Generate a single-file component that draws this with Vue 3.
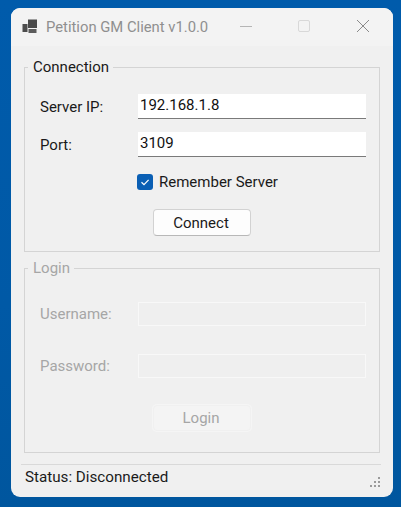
<script setup>
const connectionFields = [
  { label: 'Server IP:', value: '192.168.1.8' },
  { label: 'Port:', value: '3109' },
]
const loginFields = [{ label: 'Username:' }, { label: 'Password:' }]
</script>

<template>
  <div class="desktop">
    <div class="window">
      <header class="titlebar">
        <svg class="app-icon" width="16" height="16" viewBox="0 0 16 16">
          <rect x="0.5" y="6" width="5" height="8" fill="#4d4d4d" />
          <rect x="6" y="1.5" width="9" height="8.5" fill="#4a4a4a" />
          <rect x="6.5" y="11" width="8" height="4" fill="#5c5c5c" />
        </svg>
        <span class="title">Petition GM Client v1.0.0</span>
        <div class="controls">
          <svg width="14" height="14" viewBox="0 0 14 14" class="ctl-min"><path d="M1 7.5H13" stroke="#b5b5b5" stroke-width="1" /></svg>
          <svg width="14" height="14" viewBox="0 0 14 14" class="ctl-max"><rect x="1.5" y="1.5" width="11" height="11" rx="1.5" fill="none" stroke="#d8d8d8" /></svg>
          <svg width="14" height="14" viewBox="0 0 14 14" class="ctl-close"><path d="M1 1L13 13M13 1L1 13" stroke="#8a8a8a" stroke-width="1" /></svg>
        </div>
      </header>

      <main class="content">
        <fieldset class="group connection">
          <legend>Connection</legend>
          <div v-for="f in connectionFields" :key="f.label" class="row">
            <label>{{ f.label }}</label>
            <div class="input">{{ f.value }}</div>
          </div>
          <div class="check-row">
            <span class="checkbox">
              <svg width="16" height="16" viewBox="0 0 16 16"><path d="M4.5 8.2L7 10.6L11.6 5.8" fill="none" stroke="#fff" stroke-width="1.2" /></svg>
            </span>
            <span>Remember Server</span>
          </div>
          <div class="btn-row"><button class="btn">Connect</button></div>
        </fieldset>

        <fieldset class="group login">
          <legend>Login</legend>
          <div v-for="f in loginFields" :key="f.label" class="row">
            <label>{{ f.label }}</label>
            <div class="input off"></div>
          </div>
          <div class="btn-row"><button class="btn off">Login</button></div>
        </fieldset>
      </main>

      <footer class="statusbar">
        <span class="status-text">Status: Disconnected</span>
        <svg class="grip" width="12" height="12" viewBox="0 0 12 12" fill="#9a9a9a">
          <rect x="9" y="1" width="2" height="2" />
          <rect x="5" y="5" width="2" height="2" />
          <rect x="9" y="5" width="2" height="2" />
          <rect x="1" y="9" width="2" height="2" />
          <rect x="5" y="9" width="2" height="2" />
          <rect x="9" y="9" width="2" height="2" />
        </svg>
      </footer>
    </div>
  </div>
</template>

<style>
html, body { margin: 0; background: #0059a6; }
</style>

<style scoped>
.desktop {
  width: 401px;
  height: 507px;
  box-sizing: border-box;
  padding: 8px 8px 10px 11px;
  background: linear-gradient(180deg, #005bab 0%, #0059a6 60%, #00569e 100%);
  font-family: Roboto, "Liberation Sans", sans-serif;
  font-size: 15px;
  color: #1a1a1a;
  overflow: hidden;
}
.window {
  height: 489px;
  background: #f0f0f0;
  border-radius: 9px;
  display: flex;
  flex-direction: column;
}
.titlebar {
  height: 38px;
  flex: none;
  display: flex;
  align-items: center;
  padding-left: 11px;
  background: #f3f3f3;
  border-radius: 9px 9px 0 0;
}
.app-icon { margin-right: 8px; margin-top: -2px; }
.title { color: #8f8f8f; font-size: 14.8px; margin-top: -1px; }
.controls {
  margin-left: auto;
  display: flex;
  align-items: center;
  margin-right: 23px;
  margin-top: -2px;
}
.ctl-min { margin-right: 44px; }
.ctl-max { margin-right: 45px; }
.content {
  flex: 1;
  padding: 13px 13px 0;
  display: flex;
  flex-direction: column;
  gap: 8px;
}
.group {
  margin: 0;
  box-sizing: border-box;
  border: 1px solid #d4d4d4;
  padding: 0 13px 0 15px;
  min-width: 0;
}
.group legend {
  margin-left: -12px;
  padding: 0 4px 0 5px;
  line-height: 17px;
  height: 17px;
}
.connection { height: 193px; flex: none; }
.connection .row { height: 25px; margin-bottom: 13px; }
.connection .row:first-of-type { margin-top: 18px; }
.login { height: 193px; flex: none; color: #a6a6a6; }
.login .row { height: 24px; margin-bottom: 28px; }
.login .row:first-of-type { margin-top: 25px; }
.row { display: flex; align-items: center; }
.row label { width: 98px; flex: none; }
.input {
  width: 228px;
  height: 100%;
  box-sizing: border-box;
  background: #fff;
  border-bottom: 1px solid #7a7a7a;
  padding: 0 2px;
  line-height: 23px;
  color: #111;
}
.input.off {
  background: #efefef;
  border: 1px solid #f8f8f8;
}
.check-row {
  display: flex;
  align-items: center;
  height: 18px;
  margin: 16px 0 0 97px;
}
.checkbox {
  width: 16px;
  height: 16px;
  border-radius: 3px;
  background: #0a5fb4;
  margin-right: 6px;
  display: flex;
}
.btn-row { display: flex; padding-left: 113px; }
.connection .btn-row { margin-top: 18px; }
.login .btn-row { margin-top: -1px; }
.btn {
  width: 98px;
  height: 27px;
  box-sizing: border-box;
  border: 1px solid #d2d2d2;
  border-bottom-color: #b8b8b8;
  border-radius: 4px;
  background: #fdfdfd;
  font: inherit;
  color: #1a1a1a;
  padding: 0 2px 0 0;
}
.btn.off {
  height: 26px;
  background: #f4f4f4;
  border-color: #f0f0f0;
  box-shadow: 0 0 0 1px #f5f5f5;
  color: #a6a6a6;
}
.statusbar {
  height: 33px;
  flex: none;
  margin: 11px 12px 0 10px;
  box-sizing: border-box;
  border-top: 1px solid #d9d9d9;
  padding-left: 4px;
  padding-bottom: 9px;
  display: flex;
  align-items: center;
  justify-content: space-between;
}
.status-text { font-size: 15.2px; }
.grip { margin-top: 10px; }
</style>
